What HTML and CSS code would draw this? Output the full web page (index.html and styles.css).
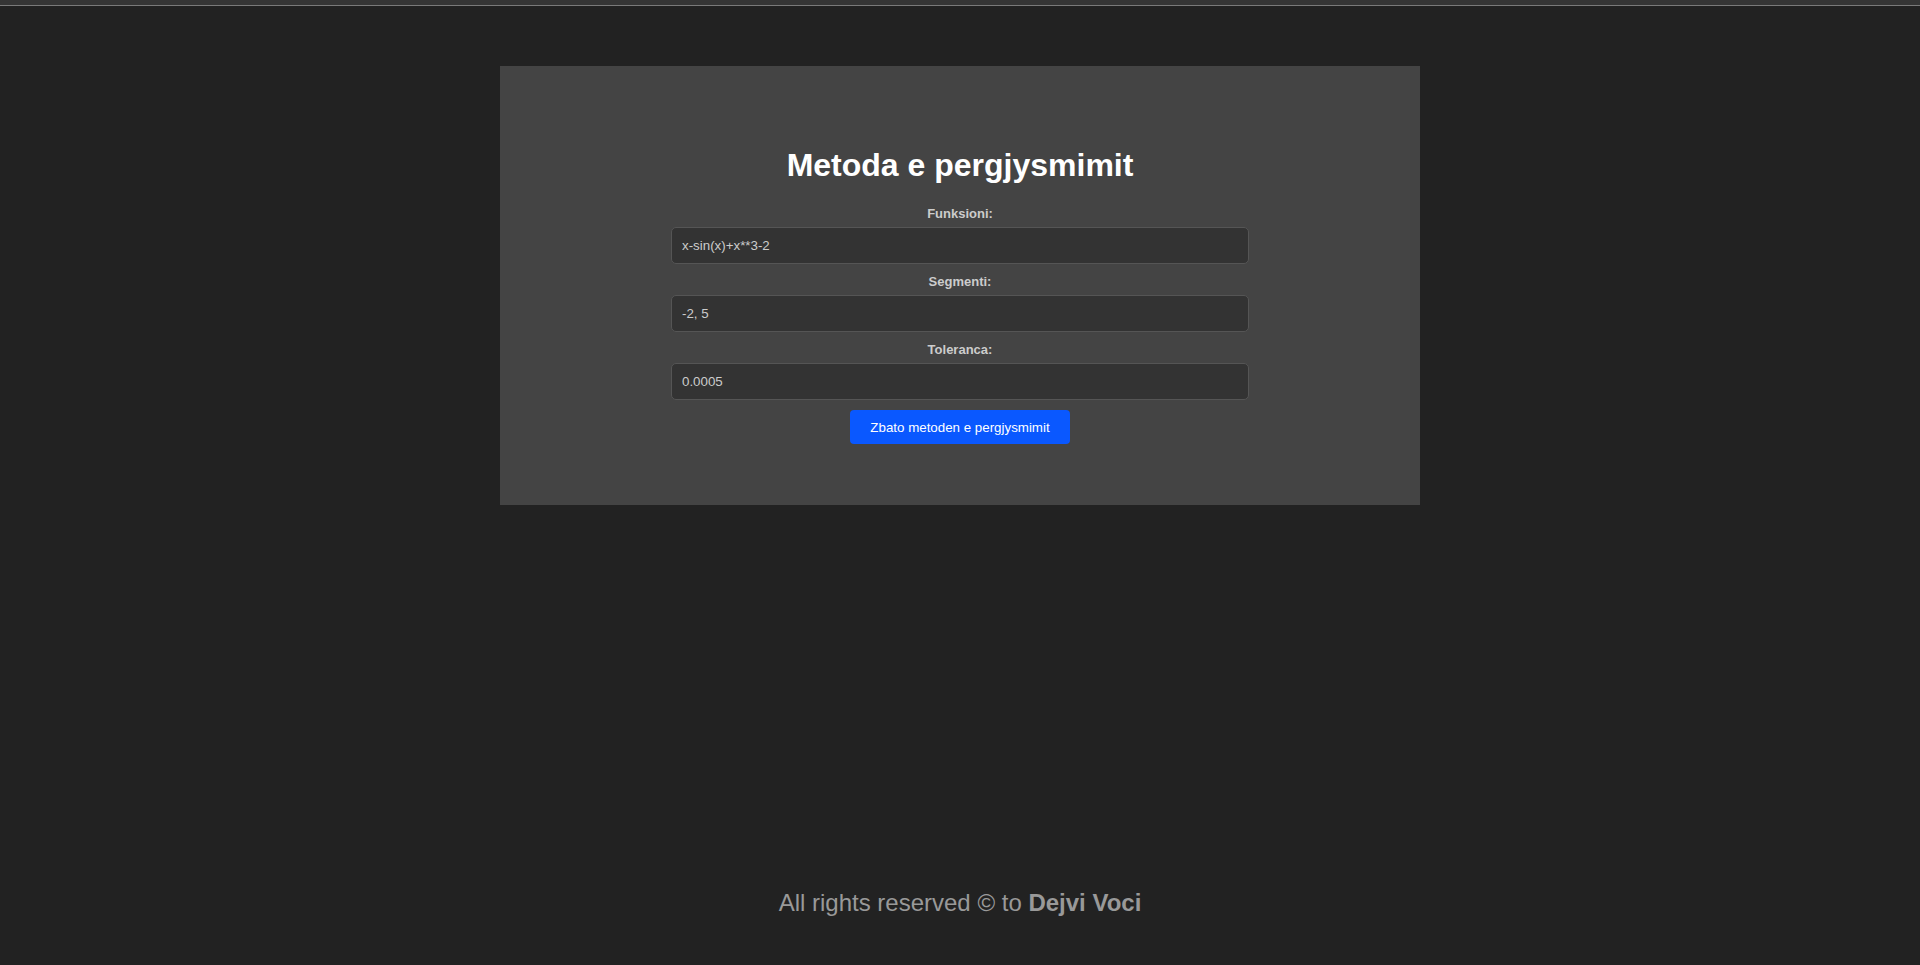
FILE: index.html
```html
<!DOCTYPE html>
<html lang="sq">
<head>
<meta charset="utf-8">
<title>Metoda e pergjysmimit</title>
<link rel="stylesheet" href="styles.css">
</head>
<body>
<div class="topbar"></div>
<main class="page">
  <section class="card">
    <h1 class="title">Metoda e pergjysmimit</h1>
    <form class="form">
      <label class="label" for="f">Funksioni:</label>
      <input class="field" id="f" type="text" value="x-sin(x)+x**3-2">
      <label class="label" for="s">Segmenti:</label>
      <input class="field" id="s" type="text" value="-2, 5">
      <label class="label" for="t">Toleranca:</label>
      <input class="field" id="t" type="text" value="0.0005">
      <button class="btn" type="button">Zbato metoden e pergjysmimit</button>
    </form>
  </section>
</main>
<footer class="footer">All rights reserved © to <b class="author">Dejvi Voci</b></footer>
</body>
</html>
```

FILE: styles.css
```css
html, body {
  margin: 0;
  padding: 0;
}
body {
  background: #222222;
  font-family: "Liberation Sans", Arial, sans-serif;
  min-height: 100vh;
  display: flex;
  flex-direction: column;
}
.topbar {
  height: 5px;
  background: #353535;
  border-bottom: 1px solid #7a7a7a;
}
.page {
  display: flex;
  justify-content: center;
  padding-top: 60px;
}
.card {
  width: 920px;
  box-sizing: border-box;
  background: #444444;
  padding: 60px 0 61px;
  display: flex;
  flex-direction: column;
  align-items: center;
}
.title {
  margin: 21px 0 22px;
  font-size: 32px;
  line-height: 37px;
  font-weight: bold;
  color: #ffffff;
}
.form {
  width: 578px;
  display: flex;
  flex-direction: column;
  align-items: center;
}
.label {
  display: block;
  font-size: 13px;
  line-height: 15px;
  font-weight: bold;
  color: #cccccc;
  margin-bottom: 6px;
}
.field {
  width: 100%;
  box-sizing: border-box;
  height: 37px;
  margin: 0 0 10px;
  padding: 0 10px;
  background: #333333;
  border: 1px solid #555555;
  border-radius: 5px;
  color: #cccccc;
  font-family: "Liberation Sans", Arial, sans-serif;
  font-size: 13.33px;
  outline: none;
}
.btn {
  height: 34px;
  padding: 0 20px;
  background: #0a58ff;
  border: none;
  border-radius: 4px;
  color: #ffffff;
  font-family: "Liberation Sans", Arial, sans-serif;
  font-size: 13.33px;
}
.footer {
  margin-top: auto;
  padding-bottom: 48px;
  text-align: center;
  color: #999999;
  font-size: 24px;
  line-height: 28px;
}
.author {
  font-weight: bold;
}
```
